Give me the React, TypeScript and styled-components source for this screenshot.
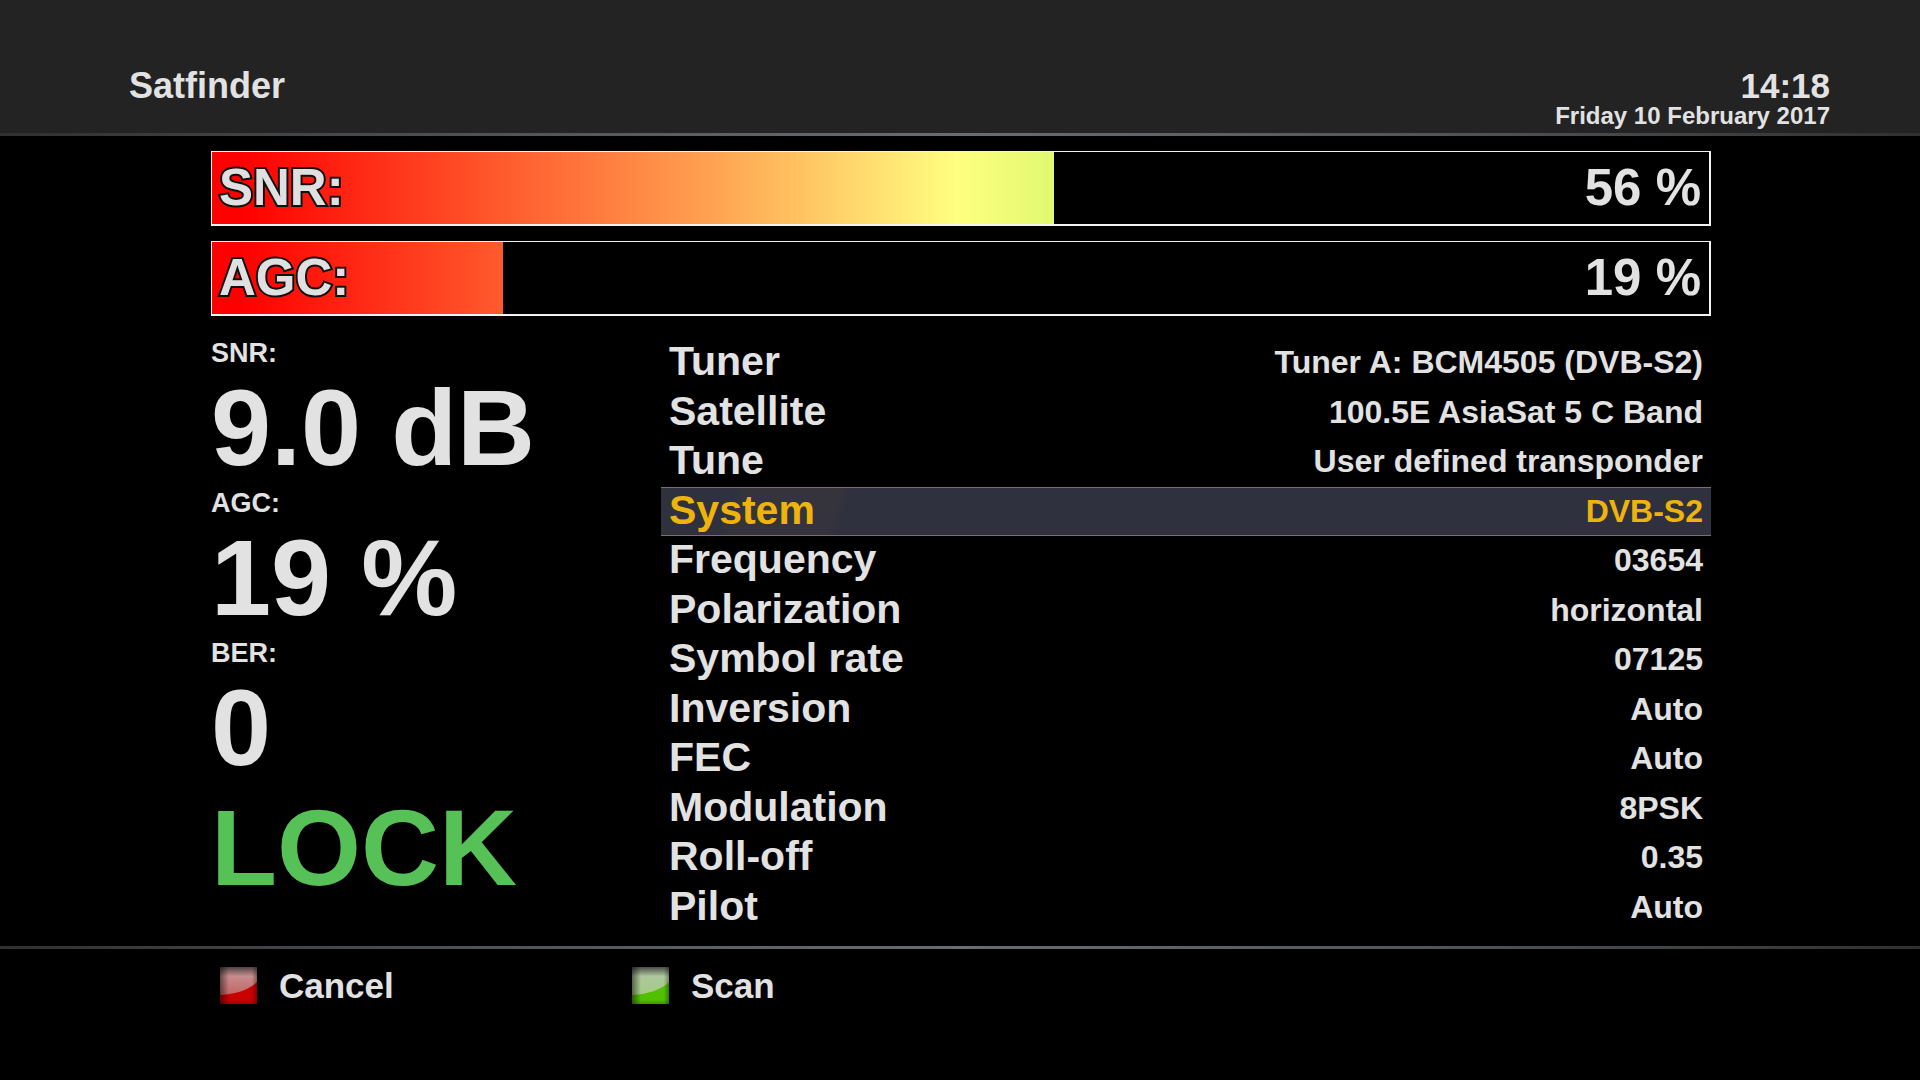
import React from "react";
import styled, { createGlobalStyle } from "styled-components";

const GlobalStyle = createGlobalStyle`
  * { box-sizing: border-box; }
  body {
    margin: 0;
    background: #000;
    color: #e2e2e2;
    font-family: "Liberation Sans", Arial, sans-serif;
    font-weight: bold;
  }
`;

const Screen = styled.div`
  display: flex;
  flex-direction: column;
  min-height: 100vh;
`;

const Header = styled.header`
  display: flex;
  justify-content: space-between;
  height: 133px;
  padding: 66px 90px 0 129px;
  background: #232323;
`;

const Rule = styled.div`
  height: 3px;
  background: linear-gradient(90deg, #303032, #505456 26%, #6a6c74 50%, #505456 76%, #303032);
`;

const Title = styled.h1`
  margin: 0;
  font-size: 36px;
  line-height: 40px;
`;

const Clock = styled.div`
  text-align: right;
`;

const Time = styled.time`
  display: block;
  font-size: 35px;
  line-height: 40px;
`;

const DateText = styled.time`
  display: block;
  font-size: 24px;
  line-height: 20px;
`;

const Main = styled.main`
  flex: 1;
  display: flex;
  flex-direction: column;
  gap: 15px;
  padding: 15px 209px 14px 211px;
`;

const Bar = styled.div`
  position: relative;
  height: 75px;
  border: solid #f2f2f2;
  border-width: 1px 2px 2px 1px;
`;

const Fill = styled.div`
  height: 100%;
  background: linear-gradient(
    90deg,
    #ff0000 0,
    #ff0000 30px,
    #ff5a2d 290px,
    #ffa050 495px,
    #ffff80 745px,
    #e1f870 842px,
    #80e040 1497px
  );
`;

const BarText = styled.div`
  position: absolute;
  inset: 0;
  display: flex;
  align-items: center;
  justify-content: space-between;
  padding: 0 8px 0 7px;
  font-size: 51px;
  line-height: 60px;
`;

const BarLabel = styled.span`
  color: #e0e0e0;
  -webkit-text-stroke: 4px #101010;
  paint-order: stroke fill;
`;

const Body = styled.div`
  flex: 1;
  display: grid;
  grid-template-columns: 450px 1fr;
  margin-top: 7px;
`;

const Stats = styled.section`
  display: flex;
  flex-direction: column;
`;

const Stat = styled.div`
  height: 150px;
`;

const StatLabel = styled.div`
  font-size: 27px;
  line-height: 30px;
`;

const StatValue = styled.div<{ $locked?: boolean }>`
  font-size: 108px;
  line-height: 120px;
  color: ${(p) => (p.$locked ? "#56c156" : "inherit")};
`;

const Settings = styled.dl`
  display: grid;
  grid-auto-rows: 1fr;
  margin: 0;
`;

const Setting = styled.div<{ $selected?: boolean }>`
  display: flex;
  align-items: flex-start;
  justify-content: space-between;
  padding: 0 8px;
  border: solid ${(p) => (p.$selected ? "#8d6e3c" : "transparent")};
  border-width: 1px 0;
  background: ${(p) =>
    p.$selected
      ? "linear-gradient(110deg, #30313f 70px, #35343d 80px, #35343d 170px, #30313f 180px)"
      : "transparent"};
  color: ${(p) => (p.$selected ? "#eeb40c" : "inherit")};
`;

const Name = styled.dt`
  font-size: 41px;
  line-height: 44px;
`;

const Value = styled.dd`
  margin: 0;
  font-size: 32px;
  line-height: 46px;
`;

const Footer = styled.footer`
  display: flex;
  height: 131px;
  padding: 18px 220px 0;
`;

const KeyButton = styled.button`
  display: flex;
  align-items: center;
  gap: 22px;
  width: 412px;
  height: 37px;
  padding: 0;
  border: 0;
  background: none;
  color: inherit;
  font: bold 35px/37px "Liberation Sans", Arial, sans-serif;
`;

type KeyProps = { id: string; base: string; glossTop: string; glossBottom: string };

const KeyIcon = ({ id, base, glossTop, glossBottom }: KeyProps) => (
  <svg width="37" height="37" viewBox="0 0 37 37" aria-hidden="true">
    <defs>
      <linearGradient id={id} x1="0" y1="0" x2="0" y2="1">
        <stop offset="0" stopColor={glossTop} />
        <stop offset="1" stopColor={glossBottom} />
      </linearGradient>
      <linearGradient id={id + "-side"} x1="0" y1="0" x2="1" y2="0">
        <stop offset="0" stopColor="#000" stopOpacity="0.5" />
        <stop offset="0.24" stopColor="#000" stopOpacity="0" />
        <stop offset="0.86" stopColor="#000" stopOpacity="0" />
        <stop offset="1" stopColor="#000" stopOpacity="0.35" />
      </linearGradient>
      <linearGradient id={id + "-top"} x1="0" y1="0" x2="0" y2="1">
        <stop offset="0" stopColor="#000" stopOpacity="0.6" />
        <stop offset="0.25" stopColor="#000" stopOpacity="0" />
        <stop offset="0.88" stopColor="#000" stopOpacity="0" />
        <stop offset="1" stopColor="#000" stopOpacity="0.2" />
      </linearGradient>
    </defs>
    <rect width="37" height="37" fill={base} />
    <path d="M0 0H37V15C29 23 16 27 0 28Z" fill={`url(#${id})`} />
    <rect width="37" height="37" fill={`url(#${id}-side)`} />
    <rect width="37" height="37" fill={`url(#${id}-top)`} />
  </svg>
);

const bars = [
  { label: "SNR:", text: "56 %", level: 56.25 },
  { label: "AGC:", text: "19 %", level: 19.45 },
];

const stats = [
  { label: "SNR:", value: "9.0 dB" },
  { label: "AGC:", value: "19 %" },
  { label: "BER:", value: "0" },
];

const settings = [
  ["Tuner", "Tuner A: BCM4505 (DVB-S2)"],
  ["Satellite", "100.5E AsiaSat 5 C Band"],
  ["Tune", "User defined transponder"],
  ["System", "DVB-S2"],
  ["Frequency", "03654"],
  ["Polarization", "horizontal"],
  ["Symbol rate", "07125"],
  ["Inversion", "Auto"],
  ["FEC", "Auto"],
  ["Modulation", "8PSK"],
  ["Roll-off", "0.35"],
  ["Pilot", "Auto"],
];

export default function App() {
  const selected = "System";
  return (
    <Screen>
      <GlobalStyle />
      <Header>
        <Title>Satfinder</Title>
        <Clock>
          <Time>14:18</Time>
          <DateText dateTime="2017-02-10">Friday 10 February 2017</DateText>
        </Clock>
      </Header>
      <Rule />
      <Main>
        {bars.map((bar) => (
          <Bar key={bar.label}>
            <Fill style={{ width: `${bar.level}%` }} />
            <BarText>
              <BarLabel>{bar.label}</BarLabel>
              <span>{bar.text}</span>
            </BarText>
          </Bar>
        ))}
        <Body>
          <Stats>
            {stats.map((stat) => (
              <Stat key={stat.label}>
                <StatLabel>{stat.label}</StatLabel>
                <StatValue>{stat.value}</StatValue>
              </Stat>
            ))}
            <StatValue $locked>LOCK</StatValue>
          </Stats>
          <Settings>
            {settings.map(([name, value]) => (
              <Setting key={name} $selected={name === selected}>
                <Name>{name}</Name>
                <Value>{value}</Value>
              </Setting>
            ))}
          </Settings>
        </Body>
      </Main>
      <Rule />
      <Footer>
        <KeyButton type="button">
          <KeyIcon id="red" base="#c80000" glossTop="#c8a0a0" glossBottom="#c46464" />
          Cancel
        </KeyButton>
        <KeyButton type="button">
          <KeyIcon id="green" base="#50c000" glossTop="#b4c4a8" glossBottom="#a4cc84" />
          Scan
        </KeyButton>
      </Footer>
    </Screen>
  );
}
